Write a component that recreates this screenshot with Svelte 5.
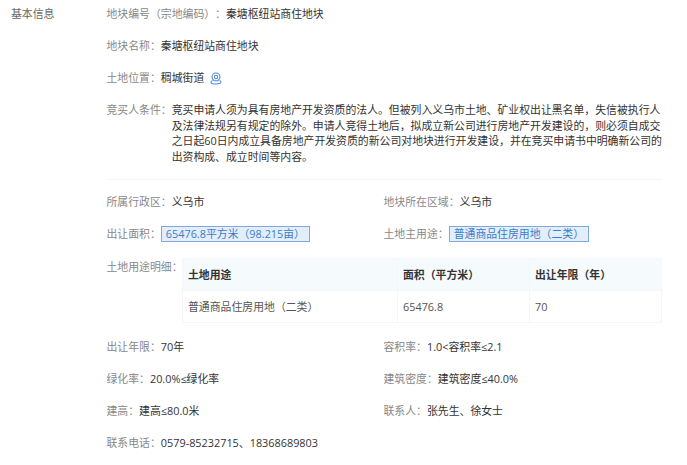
<script>
  const lowerRows = [
    [['出让年限：', '70年'], ['容积率：', '1.0<容积率≤2.1']],
    [['绿化率：', '20.0%≤绿化率'], ['建筑密度：', '建筑密度≤40.0%']],
    [['建高：', '建高≤80.0米'], ['联系人：', '张先生、徐女士']]
  ];
</script>

<div class="page">
  <div class="side">基本信息</div>
  <div class="main">
    <div class="row"><span class="label">地块编号（宗地编码）：</span><span>秦塘枢纽站商住地块</span></div>
    <div class="row"><span class="label">地块名称：</span><span>秦塘枢纽站商住地块</span></div>
    <div class="row">
      <span class="label">土地位置：</span><span>稠城街道</span>
      <svg class="pin" viewBox="0 0 12 13" width="12" height="13" fill="none" stroke="#4f8be0" stroke-width="1.100">
        <path d="M6 1a4 4 0 0 1 4 4c0 1.800-1.200 3-2.200 3.800H4.200C3.200 8 2 6.800 2 5a4 4 0 0 1 4-4z" />
        <circle cx="6" cy="5" r="1.700" />
        <path d="M2.500 8.500C1.500 9 1 9.500 1 10.200 1 11.400 3.200 12 6 12s5-.6 5-1.800c0-.7-.5-1.200-1.500-1.700" />
      </svg>
    </div>
    <div class="cond">
      <span class="label">竞买人条件：</span>
      <p>竞买申请人须为具有房地产开发资质的法人。但被列入义乌市土地、矿业权出让黑名单，失信被执行人及法律法规另有规定的除外。申请人竞得土地后，拟成立新公司进行房地产开发建设的，则必须自成交之日起60日内成立具备房地产开发资质的新公司对地块进行开发建设，并在竞买申请书中明确新公司的出资构成、成立时间等内容。</p>
    </div>

    <div class="divider"></div>

    <div class="two">
      <div class="row"><span class="label">所属行政区：</span><span>义乌市</span></div>
      <div class="row"><span class="label">地块所在区域：</span><span>义乌市</span></div>
    </div>
    <div class="two">
      <div class="row"><span class="label">出让面积：</span><span class="hl area">65476.8平方米（98.215亩）</span></div>
      <div class="row"><span class="label">土地主用途：</span><span class="hl use">普通商品住房用地（二类）</span></div>
    </div>

    <div class="detail">
      <span class="label">土地用途明细：</span>
      <table>
        <thead>
          <tr><th class="c1">土地用途</th><th class="c2">面积（平方米）</th><th>出让年限（年）</th></tr>
        </thead>
        <tbody>
          <tr><td>普通商品住房用地（二类）</td><td>65476.8</td><td>70</td></tr>
        </tbody>
      </table>
    </div>

    {#each lowerRows as pair}
      <div class="two">
        {#each pair as item}
          <div class="row"><span class="label">{item[0]}</span><span>{item[1]}</span></div>
        {/each}
      </div>
    {/each}
    <div class="row"><span class="label">联系电话：</span><span>0579-85232715、18368689803</span></div>
  </div>
</div>

<style>
  :global(body) {
    background: #fff;
  }
  .page {
    display: flex;
    height: 465px;
    overflow: hidden;
    font-family: "Open Sans", "Noto Sans CJK SC", sans-serif;
    font-size: 10.87px;
    color: #333;
    text-spacing-trim: space-all;
  }
  .side {
    width: 106.5px;
    flex: none;
    padding: 6px 0 0 11px;
    box-sizing: border-box;
    line-height: 16px;
    color: #666;
  }
  .main {
    width: 555.5px;
    flex: none;
    padding-top: 6px;
  }
  .row {
    display: flex;
    align-items: center;
    height: 16px;
    line-height: 16px;
    margin-bottom: 16px;
    white-space: nowrap;
  }
  .label {
    color: #888;
    flex: none;
  }
  .pin {
    margin-left: 6px;
  }
  .cond {
    display: flex;
    line-height: 15.5px;
  }
  .cond p {
    margin: 0;
    width: 491px;
  }
  .divider {
    height: 1px;
    background: #f5f5f5;
    margin: 15px 0 14px;
  }
  .two {
    display: grid;
    grid-template-columns: 277px 1fr;
  }
  .hl {
    box-sizing: border-box;
    height: 16px;
    line-height: 14px;
    padding-left: 4px;
    background: #e3eefb;
    border: 1px solid #7fa8dc;
    color: #3d7cc9;
  }
  .area {
    width: 149px;
  }
  .use {
    width: 140px;
  }
  .detail {
    display: flex;
    align-items: flex-start;
    height: 64px;
    margin: 0 0 17px;
  }
  .detail .label {
    width: 75.5px;
    line-height: 16px;
    padding-top: 1px;
    white-space: nowrap;
  }
  table {
    width: 480px;
    height: 64px;
    border-collapse: collapse;
    table-layout: fixed;
  }
  th,
  td {
    box-sizing: border-box;
    padding: 0 0 0 5px;
    height: 32px;
    line-height: 16px;
    text-align: left;
    border: 1px solid #f4f7f9;
    font-size: 10.87px;
  }
  th {
    background: #f5fafc;
    font-weight: 700;
  }
  td {
    color: #555;
  }
  .c1 {
    width: 215px;
  }
  .c2 {
    width: 132px;
  }
</style>
